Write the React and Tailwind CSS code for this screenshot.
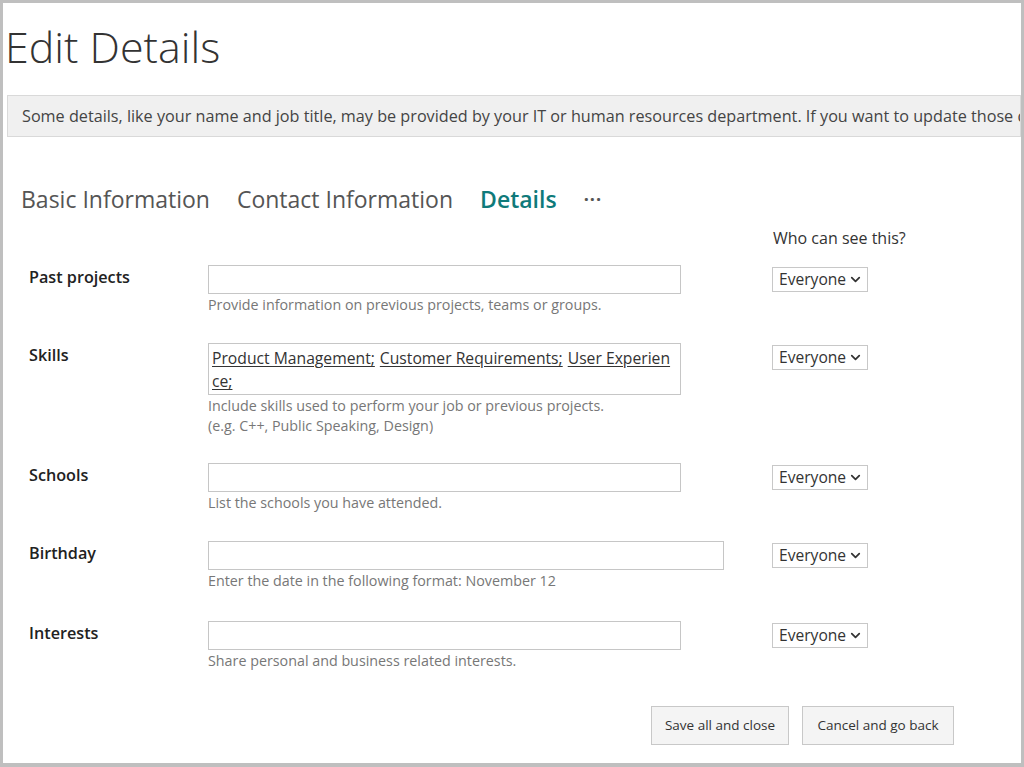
import { ChevronDown } from 'lucide-react';

const FONT = { fontFamily: '"Open Sans", "Noto Sans", Arial, sans-serif' };

function Visibility() {
  return (
    <div className="mt-[2px] flex h-[25px] w-[96px] items-center justify-between border border-[#c8c8c8] bg-white pl-[6px] pr-[4px] text-[15.6px] text-[#333]">
      <span>Everyone</span>
      <ChevronDown size={15} strokeWidth={2.8} className="text-[#333]" />
    </div>
  );
}

function Field({ label, help, wide, children, top }) {
  return (
    <div className={`grid grid-cols-[205px_564px_1fr] ${top}`}>
      <div className="mt-[2px] pl-[26px] text-[16.2px] font-semibold leading-5 text-[#222]">{label}</div>
      <div>
        {children || (
          <div className={`h-[29px] border border-[#c6c6c6] bg-white ${wide ? 'w-[516px]' : 'w-[473px]'}`} />
        )}
        <div className="mt-[1px] text-[14.3px] leading-5 text-[#777]">
          {help.map((h) => (
            <div key={h}>{h}</div>
          ))}
        </div>
      </div>
      <div>
        <Visibility />
      </div>
    </div>
  );
}

const skills = ['Product Management;', 'Customer Requirements;', 'User Experien'];

export default function App() {
  return (
    <div
      className="h-[767px] w-[1024px] overflow-hidden border-t-[3px] border-r-[3px] border-b-[4px] border-l-[3px] border-[#bfbfbf] bg-white"
      style={FONT}
    >
      <h1 className="mt-[18px] pl-[2px] text-[43px] font-light leading-[52px] text-[#333]">Edit Details</h1>

      {/* notice banner, clipped at the right edge */}
      <div className="mt-[22px] ml-[4px] flex h-[42px] items-center overflow-hidden whitespace-nowrap border border-[#d9d9d9] bg-[#f0f0f0] pl-[14px] text-[16.2px] text-[#444]">
        Some details, like your name and job title, may be provided by your IT or human resources department. If you want to update those de
      </div>

      {/* tabs */}
      <div className="mt-[46px] flex items-center gap-[27px] pl-[18px] text-[23px] leading-8 text-[#555]">
        <span>Basic Information</span>
        <span>Contact Information</span>
        <span className="font-semibold text-[#0f7a7a]">Details</span>
        <span className="text-[18px] font-bold tracking-[1px] text-[#555]">···</span>
      </div>

      <div className="mt-[13px] pl-[770px] text-[16px] leading-5 text-[#333]">Who can see this?</div>

      <Field label="Past projects" help={['Provide information on previous projects, teams or groups.']} top="mt-[17px]" />

      <Field
        label="Skills"
        top="mt-[28px]"
        help={['Include skills used to perform your job or previous projects.', '(e.g. C++, Public Speaking, Design)']}
      >
        <div className="h-[52px] w-[473px] border border-[#c6c6c6] bg-white px-[3px] pt-[3px] text-[15.7px] leading-[23px] text-[#333]">
          <div className="flex gap-[5px] whitespace-nowrap">
            {skills.map((s) => (
              <span key={s} className="underline underline-offset-2">
                {s}
              </span>
            ))}
          </div>
          <div>
            <span className="underline underline-offset-2">ce;</span>
          </div>
        </div>
      </Field>

      <Field label="Schools" help={['List the schools you have attended.']} top="mt-[27px]" />
      <Field label="Birthday" wide help={['Enter the date in the following format: November 12']} top="mt-[28px]" />
      <Field label="Interests" help={['Share personal and business related interests.']} top="mt-[30px]" />

      <div className="mt-[35px] flex gap-[13px] pl-[648px] text-[13.5px] text-[#333]">
        <button className="h-[39px] w-[138px] border border-[#c8c8c8] bg-[#f4f4f4]">Save all and close</button>
        <button className="h-[39px] w-[152px] border border-[#c8c8c8] bg-[#f4f4f4]">Cancel and go back</button>
      </div>
    </div>
  );
}
